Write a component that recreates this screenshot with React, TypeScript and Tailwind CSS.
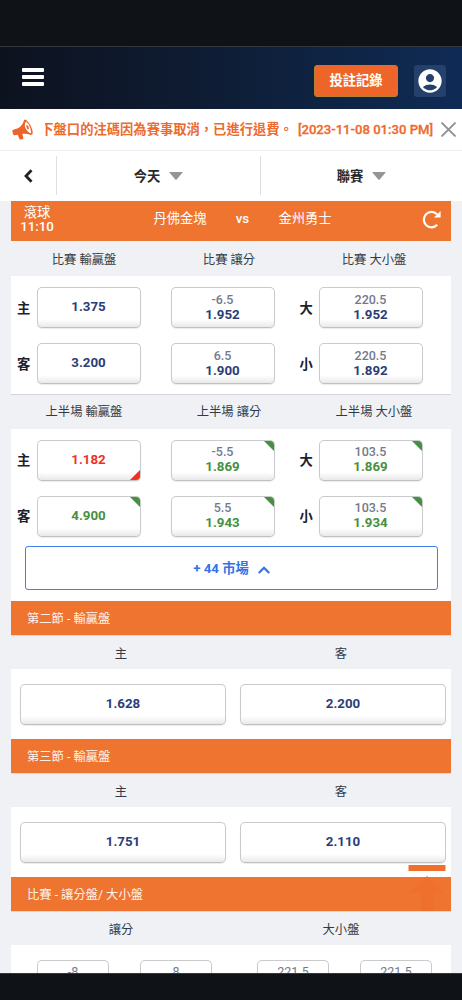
import React from "react";
import { MdAccountCircle } from "react-icons/md";

type Trend = "up" | "down";

interface Odds {
  line?: string;
  price?: string;
  trend?: Trend;
}

interface MarketRow {
  side: string;
  total: string;
  odds: [Odds, Odds, Odds];
}

const fullTime: MarketRow[] = [
  { side: "主", total: "大", odds: [{ price: "1.375" }, { line: "-6.5", price: "1.952" }, { line: "220.5", price: "1.952" }] },
  { side: "客", total: "小", odds: [{ price: "3.200" }, { line: "6.5", price: "1.900" }, { line: "220.5", price: "1.892" }] },
];

const firstHalf: MarketRow[] = [
  {
    side: "主",
    total: "大",
    odds: [
      { price: "1.182", trend: "down" },
      { line: "-5.5", price: "1.869", trend: "up" },
      { line: "103.5", price: "1.869", trend: "up" },
    ],
  },
  {
    side: "客",
    total: "小",
    odds: [
      { price: "4.900", trend: "up" },
      { line: "5.5", price: "1.943", trend: "up" },
      { line: "103.5", price: "1.934", trend: "up" },
    ],
  },
];

const OddsButton: React.FC<{ odds: Odds; className?: string }> = ({ odds, className = "w-[104px]" }) => {
  const color =
    odds.trend === "up" ? "text-[#459041]" : odds.trend === "down" ? "text-[#ee3124]" : "text-[#2b3d78]";
  return (
    <button
      className={`relative flex h-[41px] shrink-0 flex-col items-center justify-center overflow-hidden rounded-[5px] border border-[#c9cacc] border-b-[#bfc0c2] bg-linear-to-b from-white from-80% to-[#e9e9ea] pb-0.5 shadow-[0_1px_1px_rgba(0,0,0,0.08)] ${className}`}
    >
      {odds.line && <span className="text-[12.5px] leading-[15px] text-[#74798a]">{odds.line}</span>}
      {odds.price && <span className={`text-[13.3px] leading-[15px] font-bold ${color}`}>{odds.price}</span>}
      {odds.trend === "up" && (
        <svg className="absolute top-0 right-0 size-[10px]" viewBox="0 0 10 10">
          <path d="M0 0h10v10z" fill="#459041" />
        </svg>
      )}
      {odds.trend === "down" && (
        <svg className="absolute right-0 bottom-0 size-[10px]" viewBox="0 0 10 10">
          <path d="M10 0v10H0z" fill="#ee3124" />
        </svg>
      )}
    </button>
  );
};

const MarketTable: React.FC<{ rows: MarketRow[] }> = ({ rows }) => (
  <div className="flex flex-col gap-[15px] pl-[6px] font-medium">
    {rows.map((row) => (
      <div key={row.side} className="flex items-center">
        <span className="w-[19.5px] pt-0.5 text-[13.3px] font-bold text-[#1c212b]">{row.side}</span>
        <OddsButton odds={row.odds[0]} />
        <OddsButton odds={row.odds[1]} className="ml-[30px] w-[104px]" />
        <span className="ml-[25px] w-[19px] pt-0.5 text-[13.3px] font-bold text-[#1c212b]">{row.total}</span>
        <OddsButton odds={row.odds[2]} />
      </div>
    ))}
  </div>
);

const MarketHead: React.FC<{ prefix: string }> = ({ prefix }) => (
  <div className="flex h-full items-center text-center text-[12.3px] text-[#343a45]">
    <span className="ml-[13px] w-[120px]">{prefix} 輸贏盤</span>
    <span className="ml-[25px] w-[120px]">{prefix} 讓分</span>
    <span className="ml-[25px] w-[120px]">{prefix} 大小盤</span>
  </div>
);

const SectionHead: React.FC<{ title: string; columns: [string, string] }> = ({ title, columns }) => (
  <>
    <div className="flex h-[34px] items-center bg-[#ee742f] pt-0.5 pl-4 text-[12.3px] text-[#fff3ea]">{title}</div>
    <div className="flex h-[34px] items-center border-t border-[#dcd8d8] bg-[#eff1f5] pt-[3px] text-center text-[12.3px] text-[#343a45]">
      <span className="w-[220px]">{columns[0]}</span>
      <span className="w-[220px]">{columns[1]}</span>
    </div>
  </>
);

const QuarterSection: React.FC<{ title: string; home: string; away: string }> = ({ title, home, away }) => (
  <section>
    <SectionHead title={title} columns={["主", "客"]} />
    <div className="flex h-[70px] gap-[14px] px-[9px] pt-[15px]">
      <OddsButton odds={{ price: home }} className="w-[206px]" />
      <OddsButton odds={{ price: away }} className="w-[206px]" />
    </div>
  </section>
);

const Caret = () => (
  <svg className="h-2 w-[14px]" viewBox="0 0 14 8">
    <path d="M1 0h12q1 0 .4.8L7.7 7.4q-.7.7-1.4 0L.6.8Q0 0 1 0z" fill="#949599" />
  </svg>
);

export default function App() {
  return (
    <div
      lang="zh-Hant"
      className="relative flex h-[1000px] w-[462px] flex-col overflow-hidden bg-[#eff1f5] font-[Roboto,'Noto_Sans_CJK_TC',sans-serif]"
    >
      <div className="h-[47px] shrink-0 border-b border-[#34373e] bg-[#0f1317]" />

      <header className="flex h-[62px] shrink-0 items-center bg-linear-to-r from-[#0d121f] via-[#0e1e37] to-[#0f2b55] pt-[5px] pr-4 pl-[22px]">
        <div className="mb-2 flex w-[22px] flex-col gap-[3px]">
          <span className="h-1 rounded-[1px] bg-white" />
          <span className="h-1 rounded-[1px] bg-white" />
          <span className="h-1 rounded-[1px] bg-white" />
        </div>
        <button className="ml-auto h-8 w-[84px] rounded-[3px] border border-[#b9812d] bg-[#ee652a] text-[13.3px] font-bold text-white">
          投註記錄
        </button>
        <button className="ml-4 flex h-8 w-[32px] items-center justify-center rounded-[3px] bg-[#24406b] text-white">
          <MdAccountCircle size={28} className="shrink-0" />
        </button>
      </header>

      <div className="flex h-[42px] shrink-0 items-center border-b border-[#eeeeef] bg-white pl-3">
        <svg className="h-[21px] w-[21px] shrink-0" viewBox="0 0 21 21">
          <path
            d="M1.2 10.7L6 9.3Q10.700 6.500 12 1.300 12.600-.2 14.200 1 19.500 5.500 20.800 13.500 20.800 15.900 18.800 16.100 14.500 14.200 10.300 14.800L11.400 18.900Q11.400 19.900 10.500 20.200L8.500 20.600Q7.700 20.600 7.300 19.700L5.800 15.700 2.300 16.300Q1.500 16.300 1.100 15.300L.4 12.400Q.2 11.200 1.200 10.700z"
            fill="#ee652a"
          />
          <path d="M14.100 2.600Q18.200 6.300 19.200 13.400 18.800 14.700 17.400 13.800 13.500 10.900 12.800 6.800 12.700 4 14.100 2.600z" fill="#fff" />
          <path d="M14.200 6.100q2.500.3 2.700 3.300-.3 1.200-1.200 1.100-1.600-1.700-1.500-4.400z" fill="#ee652a" />
        </svg>
        <div className="ml-3 flex w-[389px] justify-end overflow-hidden pr-px text-[13.3px] font-bold whitespace-nowrap text-[#ee6a2d]">
          <span className="shrink-0">下盤口的注碼因為賽事取消，已進行退費。</span>
          <span className="shrink-0 pl-[5px] text-[13.1px] font-medium [-webkit-text-stroke:0.3px_#ee6a2d]">[2023-11-08 01:30 PM]</span>
        </div>
        <svg className="ml-[7px] size-[15px] shrink-0" viewBox="0 0 14 14" stroke="#8e9096" strokeWidth="1.8" strokeLinecap="round">
          <path d="M1 1l12 12M13 1L1 13" />
        </svg>
      </div>

      <nav className="flex h-[50px] shrink-0 items-center bg-white pb-px text-[13.3px] font-bold text-[#25282d]">
        <div className="flex w-14 justify-center">
          <svg className="h-[14px] w-[9px]" viewBox="0 0 9 14" fill="none" stroke="#202328" strokeWidth="2.8">
            <path d="M7.5 1.2L2 7l5.5 5.8" />
          </svg>
        </div>
        <div className="flex h-[39px] w-[204px] items-center justify-center gap-[9px] border-l border-[#dedfe1]">
          <span className="pt-0.5">今天</span> <Caret />
        </div>
        <div className="flex h-[39px] w-[202px] items-center justify-center gap-[9px] border-l border-[#dedfe1]">
          <span className="pt-0.5">聯賽</span> <Caret />
        </div>
      </nav>

      <main className="mx-[11px] w-[440px] flex-1 overflow-hidden bg-white">
        <div className="flex h-10 items-center bg-[#ee742f] text-white">
          <div className="mb-[3px] w-[52px] text-center text-[13.3px] leading-[14px] font-medium">
            <div className="font-normal">滾球</div>
            <div>11:10</div>
          </div>
          <div className="mb-[5px] flex flex-1 items-center text-[13.3px]">
            <span className="ml-[77px] w-[80px] text-center">丹佛金塊</span>
            <span className="w-[45px] text-center font-medium">vs</span>
            <span className="w-[80px] text-center">金州勇士</span>
          </div>
          <svg className="mr-[10px] mb-1 size-[19px]" viewBox="0 0 19 19" fill="none">
            <path d="M15 4.2A7.7 7.7 0 1 0 15.2 14.8" stroke="#fff" strokeWidth="2.2" />
            <path d="M18.6 1v6.600h-6.600z" fill="#fff" />
          </svg>
        </div>

        <div className="h-[35px] bg-[#eff1f5] pt-[3px]">
          <MarketHead prefix="比賽" />
        </div>
        <div className="h-[118px] pt-[11px]">
          <MarketTable rows={fullTime} />
        </div>

        <div className="h-[35px] border-t border-[#d4d5d8] bg-[#eff1f5] pt-px">
          <MarketHead prefix="上半場" />
        </div>
        <div className="h-[172px] pt-[10.5px]">
          <MarketTable rows={firstHalf} />
          <button className="mt-[9.5px] ml-[14px] flex h-11 w-[413px] items-center justify-center gap-[9px] rounded-[3px] border border-[#467fe3] text-[13.3px] font-bold text-[#3473e4]">
            <span className="pt-0.5">+ 44 市場</span>
            <svg className="mt-[3px] h-2 w-3" viewBox="0 0 12 8" fill="none" stroke="#3473e4" strokeWidth="2.2">
              <path d="M.8 7L6 1.8 11.2 7" />
            </svg>
          </button>
        </div>

        <QuarterSection title="第二節 - 輸贏盤" home="1.628" away="2.200" />
        <QuarterSection title="第三節 - 輸贏盤" home="1.751" away="2.110" />

        <SectionHead title="比賽 - 讓分盤/ 大小盤" columns={["讓分", "大小盤"]} />
        <div className="flex px-[26px] pt-[15px]">
          <OddsButton odds={{ line: "-8" }} className="w-[72px] pb-[18px]" />
          <OddsButton odds={{ line: "8" }} className="ml-[31px] w-[72px] pb-[18px]" />
          <OddsButton odds={{ line: "221.5" }} className="ml-[45px] w-[72px] pb-[18px]" />
          <OddsButton odds={{ line: "221.5" }} className="ml-[31px] w-[72px] pb-[18px]" />
        </div>
      </main>

      <div className="h-[27px] shrink-0 border-t border-[#34373e] bg-[#0f1317]" />

      {/* back to top */}
      <svg className="absolute top-[865px] left-[408px] h-[47px] w-[38px]" viewBox="0 0 38 47" fill="#ee702c">
        <path d="M.5 0h37v6H.5zM19 11L36 28H25.500v18H13V28H2z" />
      </svg>
    </div>
  );
}
